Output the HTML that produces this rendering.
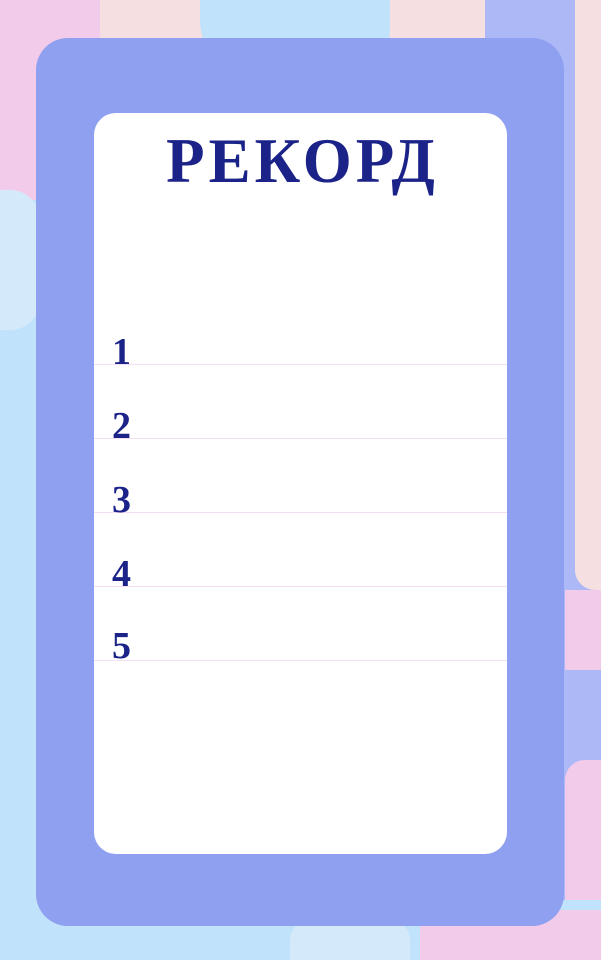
<!DOCTYPE html>
<html><head><meta charset="utf-8"><style>
html,body{margin:0;padding:0}
body{width:601px;height:960px;position:relative;overflow:hidden;background:#f5dfe0;font-family:"Liberation Serif",serif}
.b{position:absolute}
.outer{position:absolute;left:36px;top:38px;width:528px;height:888px;background:#8ea0ef;border-radius:32px}
.inner{position:absolute;left:94px;top:113px;width:413px;height:741px;background:#fff;border-radius:22px}
h1{position:absolute;left:0;width:413px;top:12px;margin:0;text-align:center;font-size:63px;font-weight:bold;color:#1b2388;letter-spacing:4px;text-indent:4px}
.line{position:absolute;left:0;width:413px;height:1px;background:#f6def2}
.n{position:absolute;left:18px;font-size:38px;font-weight:bold;color:#1b2388;line-height:1}
</style></head><body>
<div class="b" style="left:0;top:0;width:100px;height:230px;background:#f3cbea;border-radius:0 0 60px 0"></div>
<div class="b" style="left:200px;top:0;width:190px;height:80px;background:#c0e2fb;border-radius:0 0 50px 60px"></div>
<div class="b" style="left:0;top:200px;width:60px;height:760px;background:#c0e2fb"></div>
<div class="b" style="left:0;top:190px;width:40px;height:140px;background:#d4eafb;border-radius:0 30px 30px 0"></div>
<div class="b" style="left:485px;top:0;width:116px;height:960px;background:#adb9f7"></div>
<div class="b" style="left:575px;top:0;width:26px;height:590px;background:#f5dfe0;border-radius:0 0 0 20px"></div>
<div class="b" style="left:565px;top:590px;width:36px;height:80px;background:#f3cbea"></div>
<div class="b" style="left:565px;top:760px;width:36px;height:200px;background:#f3cbea;border-radius:20px 0 0 0"></div>
<div class="b" style="left:0;top:900px;width:601px;height:60px;background:#c0e2fb"></div>
<div class="b" style="left:420px;top:910px;width:181px;height:50px;background:#f3cbea;border-radius:20px 0 0 0"></div>
<div class="b" style="left:290px;top:920px;width:120px;height:40px;background:#d4eafb;border-radius:20px 20px 0 0"></div>
<div class="outer"></div>
<div class="inner">
<h1>РЕКОРД</h1>
<div class="line" style="top:251px"></div>
<div class="line" style="top:325px"></div>
<div class="line" style="top:399px"></div>
<div class="line" style="top:473px"></div>
<div class="line" style="top:547px"></div>
<div class="n" style="top:220px">1</div>
<div class="n" style="top:294px">2</div>
<div class="n" style="top:368px">3</div>
<div class="n" style="top:442px">4</div>
<div class="n" style="top:514px">5</div>
</div>
</body></html>
